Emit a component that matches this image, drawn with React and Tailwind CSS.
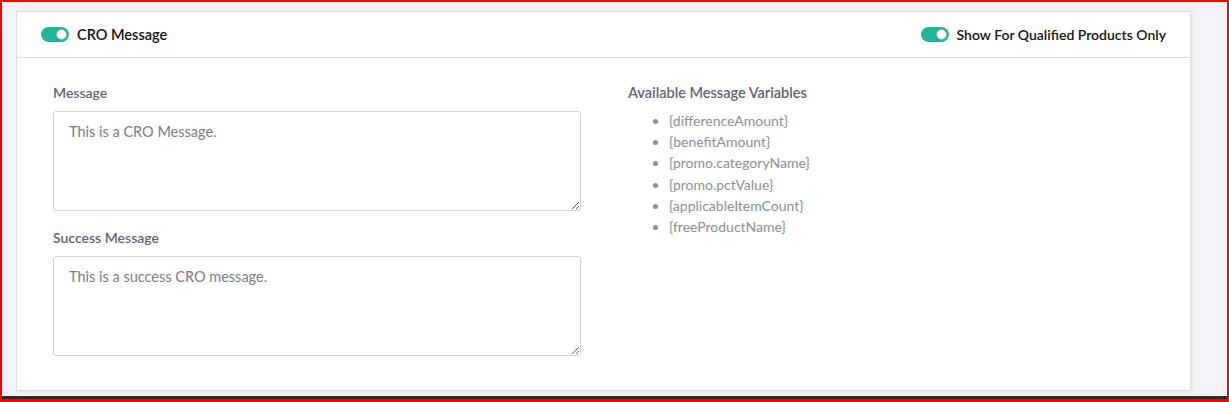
import React, { useState } from "react";

const vars = [
  "{differenceAmount}",
  "{benefitAmount}",
  "{promo.categoryName}",
  "{promo.pctValue}",
  "{applicableItemCount}",
  "{freeProductName}",
];

function Toggle({ on, onClick }) {
  return (
    <button
      onClick={onClick}
      className={`flex h-[15px] w-[28px] items-center rounded-full px-[2px] ${
        on ? "justify-end bg-[#1fb89a]" : "justify-start bg-gray-300"
      }`}
    >
      <span className="block h-[11px] w-[11px] rounded-full border border-[#9aa0a6] bg-white" />
    </button>
  );
}

export default function App() {
  const [cro, setCro] = useState(true);
  const [qualified, setQualified] = useState(true);
  const [message, setMessage] = useState("");
  const [success, setSuccess] = useState("");

  return (
    <div
      className="flex h-[402px] w-[1229px] flex-col overflow-hidden border-x-2 border-t-2 border-b-[3px] border-[#ff0000] bg-[#f1f3f6]"
      style={{ fontFamily: "Lato, 'Noto Sans', sans-serif" }}
    >
      <div className="flex-1 overflow-hidden pl-[14px] pt-[9px]">
        <div className="w-[1175px] border border-[#dcdfe3] bg-white shadow-[2px_1px_4px_rgba(0,0,0,0.06)]">
          {/* header */}
          <div className="flex h-[46px] items-center justify-between border-b border-[#dcdfe3] px-[24px]">
            <div className="flex items-center gap-[8px]">
              <Toggle on={cro} onClick={() => setCro(!cro)} />
              <span className="text-[14.5px] font-semibold text-[#111]">CRO Message</span>
            </div>
            <div className="flex items-center gap-[8px]">
              <Toggle on={qualified} onClick={() => setQualified(!qualified)} />
              <span className="text-[14px] font-semibold text-[#111]">
                Show For Qualified Products Only
              </span>
            </div>
          </div>

          {/* body */}
          <div className="flex gap-[47px] pl-[36px] pt-[25px] pb-[34px]">
            <div className="w-[528px]">
              <label className="block text-[14px] font-semibold leading-[20px] text-[#5f6572]">
                Message
              </label>
              <textarea
                value={message}
                onChange={(e) => setMessage(e.target.value)}
                placeholder="This is a CRO Message."
                className="mt-[8px] block h-[100px] w-full rounded-[3px] border border-[#cfd4da] px-[15px] py-[9px] text-[14.5px] text-[#5f6572] outline-none placeholder:text-[#777d88]"
              />
              <label className="mt-[17px] block text-[14px] font-semibold leading-[20px] text-[#5f6572]">
                Success Message
              </label>
              <textarea
                value={success}
                onChange={(e) => setSuccess(e.target.value)}
                placeholder="This is a success CRO message."
                className="mt-[8px] block h-[100px] w-full rounded-[3px] border border-[#cfd4da] px-[15px] py-[9px] text-[14.5px] text-[#5f6572] outline-none placeholder:text-[#777d88]"
              />
            </div>

            <div>
              <h3 className="text-[14.5px] font-semibold leading-[20px] text-[#5f6572]">
                Available Message Variables
              </h3>
              <ul className="mt-[7px] list-disc pl-[41px] text-[14px] leading-[21.2px] text-[#8a8f99] marker:text-[#8a8f99]">
                {vars.map((v) => (
                  <li key={v}>{v}</li>
                ))}
              </ul>
            </div>
          </div>
        </div>
      </div>
      <div className="h-[3px] bg-[#2a2a2a]" />
    </div>
  );
}
